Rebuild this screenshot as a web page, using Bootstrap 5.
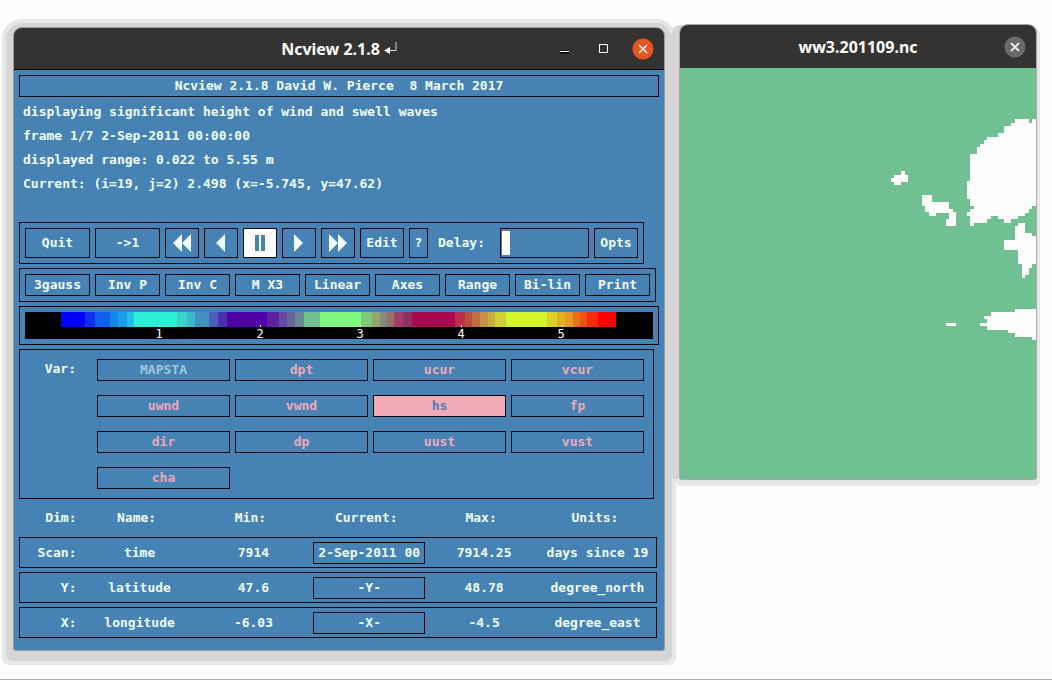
<!DOCTYPE html>
<html lang="en">
<head>
<meta charset="utf-8">
<meta name="viewport" content="width=device-width, initial-scale=1">
<title>Ncview 2.1.8</title>
<link rel="stylesheet" href="https://cdn.jsdelivr.net/npm/bootstrap@5.3.0/dist/css/bootstrap.min.css">
<style>
:root{--steel:#4682b4;--pink:#f0a9b7;--ink:#05060c;--chrome:#353331}
body{background:#fdfdfd;font-family:"DejaVu Sans Mono",monospace;font-size:13px;font-weight:700;line-height:16px;color:#f0ffff}
.desktop{display:grid;grid-template-columns:650fr 356fr;column-gap:16px;align-items:start;min-height:100vh;padding:25px 16px 28px 14px;border-bottom:1px solid #b0b0b0}
.win{border-radius:8px 8px 2px 2px;min-width:0}
.win-main{margin-top:3px;background:var(--steel);box-shadow:0 0 0 1px #9a9a9a,0 3px 0 8px #d5d5d5,0 3px 0 12px #e7e7e7}
.win-map{box-shadow:0 0 0 1px #a8a8a8,-8px 0 0 0 #d5d5d5,0 3px 0 4px #e7e7e7}
.titlebar{display:grid;grid-template-columns:1fr auto 1fr;align-items:center;height:42px;background:var(--chrome);border-radius:8px 8px 0 0;border-bottom:1px solid #000;color:#fff;font-family:"Noto Sans",sans-serif;font-size:16px;font-weight:700;line-height:20px}
.win-map .titlebar{height:43px;border-bottom:0}
.titlebar h1{font:inherit;margin:0}
.controls{gap:17px;padding-right:10px}
.ctl{border:0;background:none;padding:0;width:22px;height:22px;display:block}
.ctl svg,.x-btn svg{display:block;margin:auto}
.panel{padding:5px}
.frame{border:1px solid var(--ink)}
.caption{height:22px;line-height:20px;white-space:pre}
.status{padding:3px 4px 26px}
.status p{margin:0;line-height:24px}
.bar{display:flex;gap:5px;padding:5px;margin-bottom:4px}
.x-btn{border:1px solid var(--ink);border-radius:0;background:none;color:inherit;font:inherit;line-height:20px;height:22px;padding:0;text-align:center;flex:0 0 auto}
.tall .x-btn{height:30px;line-height:28px}
.w-text{width:65px}.w-icon{width:34px}.w-short{width:44px}.w-tiny{width:19px}
.x-btn.on{background:#fff;color:var(--steel)}
.bar label{line-height:29px;padding:0 10px 0 5px}
.x-input{width:89px;height:30px;border:1px solid var(--ink);border-radius:0;padding:0 12px;color:inherit;font:inherit;background:linear-gradient(#fff,#fff) 1px 2px/8px 24px no-repeat}
.scale-bar svg{display:block;width:100%;height:auto;background:#000;overflow:visible}
.vars{display:grid;grid-template-columns:72px repeat(4,1fr);column-gap:5px;row-gap:14px;padding:9px 9px 9px 0;margin-right:5px}
.vars .x-btn{color:var(--pink)}
.vars .x-btn.off{color:#9cc9dc}
.vars .x-btn.on{background:var(--pink);color:#4f7fab}
.vars-label{grid-row:1/5;text-align:right;padding-right:16px;line-height:20px}
.first-col{grid-column-start:2}
.dims{width:calc(100% - 2px);table-layout:fixed;border-collapse:separate;border-spacing:0 4px;margin-bottom:3px}
.dims th,.dims td{padding:0;text-align:center;font-weight:700;white-space:nowrap;overflow:hidden}
.dims thead th{height:30px;padding-right:6px}
.dims tbody th,.dims tbody td{height:31px;border:solid var(--ink);border-width:1px 0}
.dims tbody th{border-left-width:1px}
.dims tbody td:last-child{border-right-width:1px}
.dims th:first-child{text-align:right;padding-right:5px}
.dims .x-btn{width:calc(100% - 8px);display:block;margin:auto;overflow:hidden}
.map{display:block;width:100%;height:auto;background:#71c091}
</style>
</head>
<body>
<main class="desktop">
  <section class="win win-main">
    <header class="titlebar">
      <span></span>
      <h1 class="d-flex align-items-center gap-1">Ncview 2.1.8
        <svg width="13" height="13" viewBox="0 0 13 13"><path d="M12 0V8.500H4" fill="none" stroke="#d8d8d8"/><path d="M0 8.500L6 5V12Z" fill="#fff"/></svg>
      </h1>
      <div class="controls d-flex justify-content-end">
        <button class="ctl" aria-label="Minimize"><svg width="22" height="22"><path d="M6 14H15" stroke="#000" stroke-width="3"/><path d="M6 13.500H15" stroke="#fff"/></svg></button>
        <button class="ctl" aria-label="Maximize"><svg width="22" height="22"><rect x="6.500" y="6.500" width="8" height="8" fill="none" stroke="#fff"/></svg></button>
        <button class="ctl" aria-label="Close"><svg width="22" height="22"><circle cx="11" cy="11" r="10.500" fill="#e95420"/><path d="M7 7L15 15M15 7L7 15" stroke="#fff" stroke-width="1.500"/></svg></button>
      </div>
    </header>
    <div class="panel">
      <div class="frame caption text-center">Ncview 2.1.8 David W. Pierce  8 March 2017</div>
      <div class="status">
        <p>displaying significant height of wind and swell waves</p>
        <p>frame 1/7 2-Sep-2011 00:00:00</p>
        <p>displayed range: 0.022 to 5.55 m</p>
        <p>Current: (i=19, j=2) 2.498 (x=-5.745, y=47.62)</p>
      </div>
      <div class="d-flex">
        <div class="frame bar tall">
          <button class="x-btn w-text">Quit</button>
          <button class="x-btn w-text">-&gt;1</button>
          <button class="x-btn w-icon" aria-label="Rewind"><svg width="18" height="18"><path d="M9 0V18L0 9ZM18 0V18L9 9Z" fill="currentColor"/></svg></button>
          <button class="x-btn w-icon" aria-label="Back"><svg width="10" height="18"><path d="M9 0V18L0 9Z" fill="currentColor"/></svg></button>
          <button class="x-btn w-icon on" aria-label="Pause"><svg width="10" height="18"><path d="M0 1H4V17H0ZM6 1H10V17H6Z" fill="currentColor"/></svg></button>
          <button class="x-btn w-icon" aria-label="Forward"><svg width="10" height="18"><path d="M0 0V18L9 9Z" fill="currentColor"/></svg></button>
          <button class="x-btn w-icon" aria-label="Fast forward"><svg width="18" height="18"><path d="M0 0V18L9 9ZM9 0V18L18 9Z" fill="currentColor"/></svg></button>
          <button class="x-btn w-short">Edit</button>
          <button class="x-btn w-tiny">?</button>
          <label for="delay">Delay:</label>
          <input id="delay" class="x-input" type="text">
          <button class="x-btn w-short">Opts</button>
        </div>
      </div>
      <div class="d-flex">
        <div class="frame bar">
          <button class="x-btn w-text">3gauss</button>
          <button class="x-btn w-text">Inv P</button>
          <button class="x-btn w-text">Inv C</button>
          <button class="x-btn w-text">M X3</button>
          <button class="x-btn w-text">Linear</button>
          <button class="x-btn w-text">Axes</button>
          <button class="x-btn w-text">Range</button>
          <button class="x-btn w-text">Bi-lin</button>
          <button class="x-btn w-text">Print</button>
        </div>
      </div>
      <div class="frame bar scale-bar">
        <svg viewBox="0 0 628 27" role="img" aria-label="Colour scale">
          <g shape-rendering="crispEdges">
            <path fill="#0000ff" d="M36 0h25v15h-25z"/><path fill="#1030f0" d="M60 0h10v15h-10z"/><path fill="#1060f0" d="M70 0h15v15h-15z"/><path fill="#1088e8" d="M85 0h8v15h-8z"/><path fill="#18a0e8" d="M93 0h9v15h-9z"/><path fill="#20c0e8" d="M102 0h7v15h-7z"/><path fill="#2cf0d8" d="M109 0h43v15h-43z"/><path fill="#38d4c8" d="M152 0h10v15h-10z"/><path fill="#38b8c8" d="M162 0h8v15h-8z"/><path fill="#4090c0" d="M170 0h14v15h-14z"/><path fill="#4860b8" d="M184 0h9v15h-9z"/><path fill="#4830b0" d="M193 0h9v15h-9z"/><path fill="#5000a8" d="M202 0h40v15h-40z"/><path fill="#5c20a0" d="M242 0h12v15h-12z"/><path fill="#6848a0" d="M254 0h8v15h-8z"/><path fill="#686898" d="M262 0h8v15h-8z"/><path fill="#688898" d="M270 0h9v15h-9z"/><path fill="#70c090" d="M279 0h16v15h-16z"/><path fill="#80f880" d="M295 0h41v15h-41z"/><path fill="#80c878" d="M336 0h11v15h-11z"/><path fill="#90a870" d="M347 0h8v15h-8z"/><path fill="#888880" d="M355 0h7v15h-7z"/><path fill="#987068" d="M362 0h7v15h-7z"/><path fill="#a04068" d="M369 0h9v15h-9z"/><path fill="#903060" d="M378 0h9v15h-9z"/><path fill="#a80850" d="M387 0h43v15h-43z"/><path fill="#b83048" d="M430 0h10v15h-10z"/><path fill="#b85040" d="M440 0h7v15h-7z"/><path fill="#c07040" d="M447 0h8v15h-8z"/><path fill="#c89048" d="M455 0h8v15h-8z"/><path fill="#c8b040" d="M463 0h7v15h-7z"/><path fill="#d0d030" d="M470 0h11v15h-11z"/><path fill="#d4f42c" d="M481 0h41v15h-41z"/><path fill="#e0d028" d="M522 0h10v15h-10z"/><path fill="#e0b020" d="M532 0h8v15h-8z"/><path fill="#e89820" d="M540 0h8v15h-8z"/><path fill="#e87018" d="M548 0h7v15h-7z"/><path fill="#f05010" d="M555 0h7v15h-7z"/><path fill="#f82c08" d="M562 0h11v15h-11z"/><path fill="#ff0000" d="M573 0h18v15h-18z"/>
            <path fill="#fff" d="M134 13h1v2h-1zM235 13h1v2h-1zM335 13h1v2h-1zM436 13h1v2h-1zM537 13h1v2h-1z"/>
          </g>
          <g fill="#fff" text-anchor="middle" font-family="DejaVu Sans Mono, monospace" font-size="12" font-weight="400">
            <text x="134" y="26">1</text><text x="235" y="26">2</text><text x="335" y="26">3</text><text x="436" y="26">4</text><text x="536" y="26">5</text>
          </g>
        </svg>
      </div>
      <div class="frame vars">
        <div class="vars-label">Var:</div>
        <button class="x-btn off">MAPSTA</button><button class="x-btn">dpt</button><button class="x-btn">ucur</button><button class="x-btn">vcur</button>
        <button class="x-btn">uwnd</button><button class="x-btn">vwnd</button><button class="x-btn on">hs</button><button class="x-btn">fp</button>
        <button class="x-btn">dir</button><button class="x-btn">dp</button><button class="x-btn">uust</button><button class="x-btn">vust</button>
        <button class="x-btn first-col">cha</button>
      </div>
      <table class="dims">
        <colgroup><col style="width:9.8%"><col style="width:18.2%"><col style="width:17.5%"><col style="width:18.8%"><col style="width:17.2%"><col style="width:18.5%"></colgroup>
        <thead><tr><th>Dim:</th><th>Name:</th><th>Min:</th><th>Current:</th><th>Max:</th><th>Units:</th></tr></thead>
        <tbody>
          <tr><th>Scan:</th><td>time</td><td>7914</td><td><button class="x-btn">2-Sep-2011 00</button></td><td>7914.25</td><td>days since 19</td></tr>
          <tr><th>Y:</th><td>latitude</td><td>47.6</td><td><button class="x-btn">-Y-</button></td><td>48.78</td><td>degree_north</td></tr>
          <tr><th>X:</th><td>longitude</td><td>-6.03</td><td><button class="x-btn">-X-</button></td><td>-4.5</td><td>degree_east</td></tr>
        </tbody>
      </table>
    </div>
  </section>

  <section class="win win-map">
    <header class="titlebar">
      <span></span>
      <h1>ww3.201109.nc</h1>
      <div class="controls d-flex justify-content-end">
        <button class="ctl" aria-label="Close"><svg width="22" height="22"><circle cx="11" cy="11" r="10.500" fill="#6b6a69"/><path d="M7 7L15 15M15 7L7 15" stroke="#fff" stroke-width="1.750"/></svg></button>
      </div>
    </header>
    <svg class="map" viewBox="-540 174 1068 1233" role="img" aria-label="Significant wave height map">
      <g fill="#fefefe" shape-rendering="crispEdges">
        <polygon points="465,327 507,327 507,338 515,338 515,327 528,327 528,587 516,587 516,597 506,597 506,608 495,608 495,618 475,618 475,628 454,628 454,638 433,638 433,628 413,628 413,618 392,618 392,627 382,627 382,638 341,638 341,647 330,647 330,617 320,617 320,607 330,607 330,597 341,597 341,588 330,588 330,567 320,567 320,514 330,514 330,432 351,432 351,411 360,411 360,401 371,401 371,391 382,391 382,381 413,381 413,370 433,370 433,349 454,349 454,338 465,338"/>
        <polygon points="124,484 134,484 134,494 144,494 144,515 123,515 123,525 103,525 103,515 93,515 93,504 103,504 103,494 124,494"/>
        <polygon points="186,556 216,556 216,577 268,577 268,597 278,597 278,607 289,607 289,648 258,648 258,627 268,627 268,608 227,608 227,617 206,617 206,607 196,607 196,587 186,587"/>
        <polygon points="475,639 495,639 495,669 516,669 516,679 528,679 528,762 516,762 516,773 506,773 506,794 495,794 495,804 486,804 486,762 475,762 475,721 433,721 433,690 465,690 465,649 475,649"/>
        <polygon points="258,939 289,939 289,949 258,949"/>
        <polygon points="528,897 465,897 465,907 392,907 392,918 372,918 372,928 381,928 381,939 361,939 361,949 381,949 381,959 444,959 444,969 465,969 465,980 516,980 516,990 528,990"/>
      </g>
    </svg>
  </section>
</main>
<script src="https://cdn.jsdelivr.net/npm/bootstrap@5.3.0/dist/js/bootstrap.bundle.min.js"></script>
</body>
</html>
